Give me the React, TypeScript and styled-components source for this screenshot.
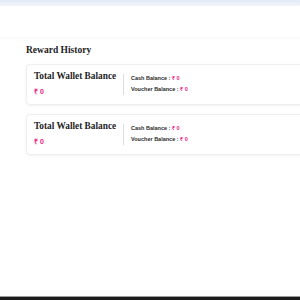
import React from 'react';
import styled, { createGlobalStyle } from 'styled-components';

const GlobalStyle = createGlobalStyle`
  html, body {
    margin: 0;
    padding: 0;
    height: 100%;
    background: #ffffff;
    overflow: hidden;
  }
  #root {
    height: 100%;
  }
`;

const Page = styled.div`
  display: flex;
  flex-direction: column;
  height: 100%;
`;

const TopBar = styled.div`
  height: 6px;
  background: linear-gradient(180deg, #e3eaf6 0%, #f1f5fb 100%);
`;

const HeaderSpace = styled.div`
  height: 31px;
  box-shadow: 0 1px 2px rgba(0, 0, 0, 0.04);
`;

const Main = styled.main`
  flex: 1;
  padding: 7px 0 0 26px;
  overflow: hidden;
`;

const Title = styled.h2`
  margin: 0 0 8px;
  font-family: "Liberation Serif", "DejaVu Serif", serif;
  font-weight: 700;
  font-size: 9.5px;
  line-height: 12px;
  color: #1c1c1c;
`;

const CardList = styled.div`
  display: flex;
  flex-direction: column;
  gap: 9px;
`;

const Card = styled.section`
  display: flex;
  align-items: center;
  width: 300px;
  height: 41px;
  box-sizing: border-box;
  padding: 0 7px;
  border: 1px solid #efefef;
  border-radius: 4px;
  box-shadow: 0 1px 3px rgba(0, 0, 0, 0.06);
  background: #fff;
`;

const TotalBlock = styled.div`
  display: flex;
  flex-direction: column;
  gap: 5px;
  width: 81px;
  margin-top: -3px;
`;

const TotalLabel = styled.div`
  font-family: "Liberation Serif", "DejaVu Serif", serif;
  font-weight: 700;
  font-size: 9.3px;
  line-height: 11px;
  color: #1e1e1e;
  white-space: nowrap;
`;

const Amount = styled.span<{ small?: boolean }>`
  font-family: "Liberation Sans", Arial, sans-serif;
  font-size: ${(p) => (p.small ? '5.5px' : '7px')};
  font-weight: 600;
  color: #e8197f;
`;

const Divider = styled.div`
  width: 1px;
  height: 21px;
  margin: 0 7px 0 8px;
  background: #dcdcdc;
`;

const Breakdown = styled.div`
  display: flex;
  flex-direction: column;
  gap: 5px;
  margin-top: -2px;
`;

const BreakdownRow = styled.div`
  font-family: "Liberation Sans", Arial, sans-serif;
  font-weight: 700;
  font-size: 5.5px;
  line-height: 6px;
  color: #2a2a2a;
  white-space: nowrap;
`;

const BottomBar = styled.div`
  height: 3px;
  border-top: 1px solid #9a9a9a;
  background: #1b1b1b;
`;

const WalletCard: React.FC = () => (
  <Card>
    <TotalBlock>
      <TotalLabel>Total Wallet Balance</TotalLabel>
      <Amount>₹ 0</Amount>
    </TotalBlock>
    <Divider />
    <Breakdown>
      <BreakdownRow>
        Cash Balance : <Amount small>₹ 0</Amount>
      </BreakdownRow>
      <BreakdownRow>
        Voucher Balance : <Amount small>₹ 0</Amount>
      </BreakdownRow>
    </Breakdown>
  </Card>
);

const App: React.FC = () => (
  <>
    <GlobalStyle />
    <Page>
      <TopBar />
      <HeaderSpace />
      <Main>
        <Title>Reward History</Title>
        <CardList>
          <WalletCard />
          <WalletCard />
        </CardList>
      </Main>
      <BottomBar />
    </Page>
  </>
);

export default App;
